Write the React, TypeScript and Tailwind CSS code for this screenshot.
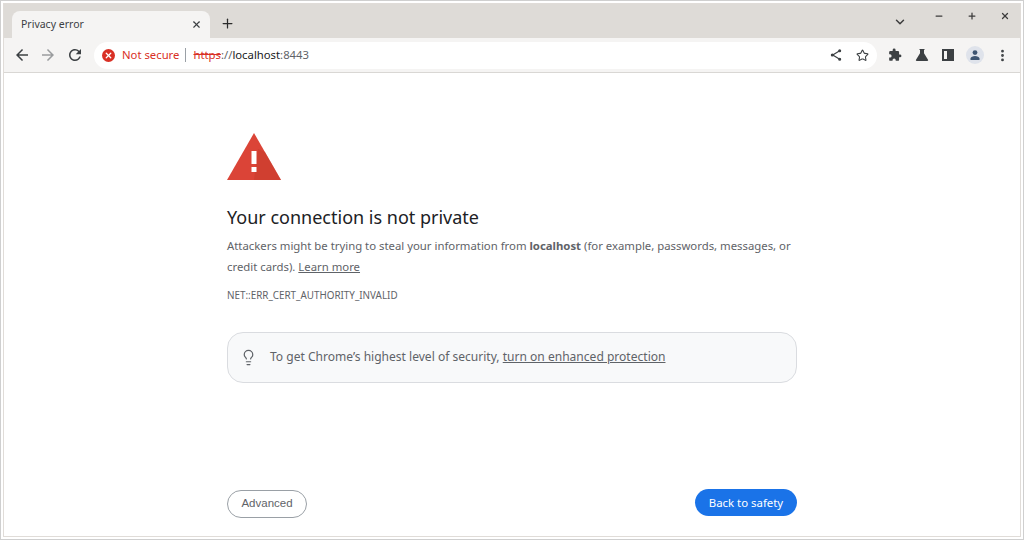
import { Plus, X, ChevronDown, Minus, Star, EllipsisVertical, Lightbulb } from 'lucide-react';

const Toolbar = () => (
  <div className="h-[35px] flex items-center bg-[#f5f4f3] border-b border-[#d9d7d4]">
    <div className="w-[90px] pl-[9px] flex items-center gap-[8px] text-[#3c4043] shrink-0">
      <svg width="18" height="18" viewBox="0 0 24 24" fill="currentColor">
        <path d="M20 11H7.830l5.590-5.590L12 4l-8 8 8 8 1.410-1.410L7.830 13H20v-2z" />
      </svg>
      <svg width="18" height="18" viewBox="0 0 24 24" fill="#9a9c9e">
        <path d="M4 11h12.170l-5.590-5.590L12 4l8 8-8 8-1.410-1.410L16.170 13H4v-2z" />
      </svg>
      <svg width="18" height="18" viewBox="0 0 24 24" fill="currentColor" className="ml-[1px]">
        <path d="M17.650 6.350A7.958 7.958 0 0 0 12 4c-4.420 0-7.990 3.580-7.990 8s3.570 8 7.990 8c3.730 0 6.840-2.550 7.730-6h-2.080A5.990 5.990 0 0 1 12 18c-3.310 0-6-2.690-6-6s2.690-6 6-6c1.660 0 3.140.690 4.220 1.780L13 11h7V4l-2.350 2.350z" />
      </svg>
    </div>
    <div className="h-[27px] w-[783px] shrink-0 rounded-full bg-white flex items-center pl-[8px] text-[11.3px]">
      <span className="w-[13px] h-[13px] rounded-full bg-[#d93025] flex items-center justify-center">
        <X size={9} strokeWidth={3.5} className="text-white" />
      </span>
      <span className="ml-[7px] text-[#d93025]">Not secure</span>
      <span className="ml-[6px] w-px h-[14px] bg-[#9aa0a6]"></span>
      <span className="ml-[7px] text-[#d93025] line-through">https</span>
      <span className="text-[#5f6368]">://</span>
      <span className="text-[#202124]">localhost</span>
      <span className="text-[#5f6368]">:8443</span>
      <div className="ml-auto mr-[8px] flex items-center gap-[14px] text-[#3c4043]">
        <svg width="12" height="12" viewBox="0 0 13 13" fill="none" stroke="currentColor" strokeWidth="1.300">
          <path d="M10.500 2 3 6.500 10.500 11" />
          <circle cx="10.500" cy="2" r="1" fill="currentColor" />
          <circle cx="10.500" cy="11" r="1" fill="currentColor" />
          <circle cx="2.500" cy="6.500" r="1" fill="currentColor" />
        </svg>
        <Star size={13} strokeWidth={2} />
      </div>
    </div>
    <div className="flex-1 flex items-center text-[#3c4043] pl-[11px]">
      <svg width="14" height="14" viewBox="0 0 24 24" fill="currentColor">
        <path d="M20.500 11H19V7a2 2 0 0 0-2-2h-4V3.500a2.500 2.500 0 0 0-5 0V5H4a2 2 0 0 0-2 2v3.800h1.500a2.700 2.700 0 0 1 0 5.400H2V20a2 2 0 0 0 2 2h3.800v-1.500a2.700 2.700 0 0 1 5.400 0V22H17a2 2 0 0 0 2-2v-4h1.500a2.500 2.500 0 0 0 0-5z" />
      </svg>
      <svg width="14" height="14" viewBox="0 0 14 14" fill="currentColor" className="ml-[13px]">
        <path d="M4.500 1h5v1H9v3.200l4 6.600c.4.700 0 1.200-.7 1.200H1.700c-.7 0-1.100-.5-.7-1.200l4-6.600V2h-.5z" />
      </svg>
      <span className="ml-[13px] w-[12px] h-[12px] border-2 border-[#3c4043] flex justify-end">
        <span className="w-[5px] h-full bg-[#3c4043]"></span>
      </span>
      <span className="ml-[12px] w-[18px] h-[18px] rounded-full bg-[#dfe3eb] flex items-center justify-center">
        <svg width="12" height="12" viewBox="0 0 12 12" fill="#3f5672">
          <circle cx="6" cy="3.600" r="2.400" />
          <path d="M1.500 11V9.600C1.500 8 4 7 6 7s4.500 1 4.500 2.600V11z" />
        </svg>
      </span>
      <EllipsisVertical size={15} strokeWidth={2.5} className="ml-[11px]" />
    </div>
  </div>
);

const TabBar = () => (
  <div className="h-[34px] flex bg-[#dedbd7] items-end">
    <div className="ml-[8px] w-[198px] h-[27px] bg-[#f5f4f3] rounded-t-[8px] flex items-center pl-[9px] pr-[8px] text-[#3c4043] text-[10.5px]">
      <span>Privacy error</span>
      <X size={11} strokeWidth={2.5} className="ml-auto" />
    </div>
    <Plus size={15} strokeWidth={2} className="ml-[10px] mb-[7px] text-[#2b2b2b]" />
    <div className="ml-auto flex items-center h-full pr-[10px] text-[#3c3c3c]">
      <ChevronDown size={14} strokeWidth={2.5} className="mt-[2px]" />
      <Minus size={10} strokeWidth={3} className="ml-[27px] mb-[10px]" />
      <Plus size={10} strokeWidth={3} className="ml-[23px] mb-[10px]" />
      <X size={10} strokeWidth={3} className="ml-[23px] mb-[10px]" />
    </div>
  </div>
);

export default function App() {
  return (
    <div className="w-[1024px] h-[540px] bg-white border border-[#cfcfcf] p-[2px] overflow-hidden" style={{ fontFamily: '"Noto Sans", sans-serif' }}>
      <div className="w-full h-full border border-[#e0dcd8] flex flex-col bg-white">
        <TabBar />
        <Toolbar />
        <main className="flex-1 w-[570px] ml-[223px] pt-[60px] flex flex-col">
          <svg width="54" height="47" viewBox="0 0 54 47" className="shrink-0">
            <path d="M27 0 54 47H0z" fill="#db4437" />
            <path d="M27 47h27L38 19l-7-3z" fill="#c53929" opacity="0.5" />
            <rect x="24.500" y="18" width="5" height="13" fill="#fff" />
            <rect x="24.500" y="34" width="5" height="5" fill="#fff" />
          </svg>
          <h1 className="mt-[23px] text-[18px] leading-[28px] text-[#202124]">Your connection is not private</h1>
          <p className="mt-[4px] text-[11.35px] leading-[21px] text-[#5f6368]">
            Attackers might be trying to steal your information from <b>localhost</b> (for example, passwords, messages, or credit cards). <span className="underline">Learn more</span>
          </p>
          <p className="mt-[11px] text-[9.85px] leading-[14px] text-[#5f6368]">NET::ERR_CERT_AUTHORITY_INVALID</p>
          <div className="mt-[30px] h-[51px] rounded-[16px] border border-[#dadce0] bg-[#f8f9fa] flex items-center pl-[12px] pb-[1px] text-[#5f6368] text-[12.05px]">
            <Lightbulb size={17} strokeWidth={1.75} />
            <span className="ml-[13px]">To get Chrome’s highest level of security, <span className="underline">turn on enhanced protection</span></span>
          </div>
          <div className="mt-auto mb-[18px] flex justify-between items-start">
            <button className="mt-[1px] h-[28px] w-[80px] rounded-full border border-[#9aa0a6] bg-white text-[#5f6368] text-[11.5px]" style={{ fontFamily: '"Liberation Sans", sans-serif' }}>Advanced</button>
            <button className="h-[27px] w-[102px] rounded-full bg-[#1a73e8] text-white text-[11.4px]">Back to safety</button>
          </div>
        </main>
      </div>
    </div>
  );
}
